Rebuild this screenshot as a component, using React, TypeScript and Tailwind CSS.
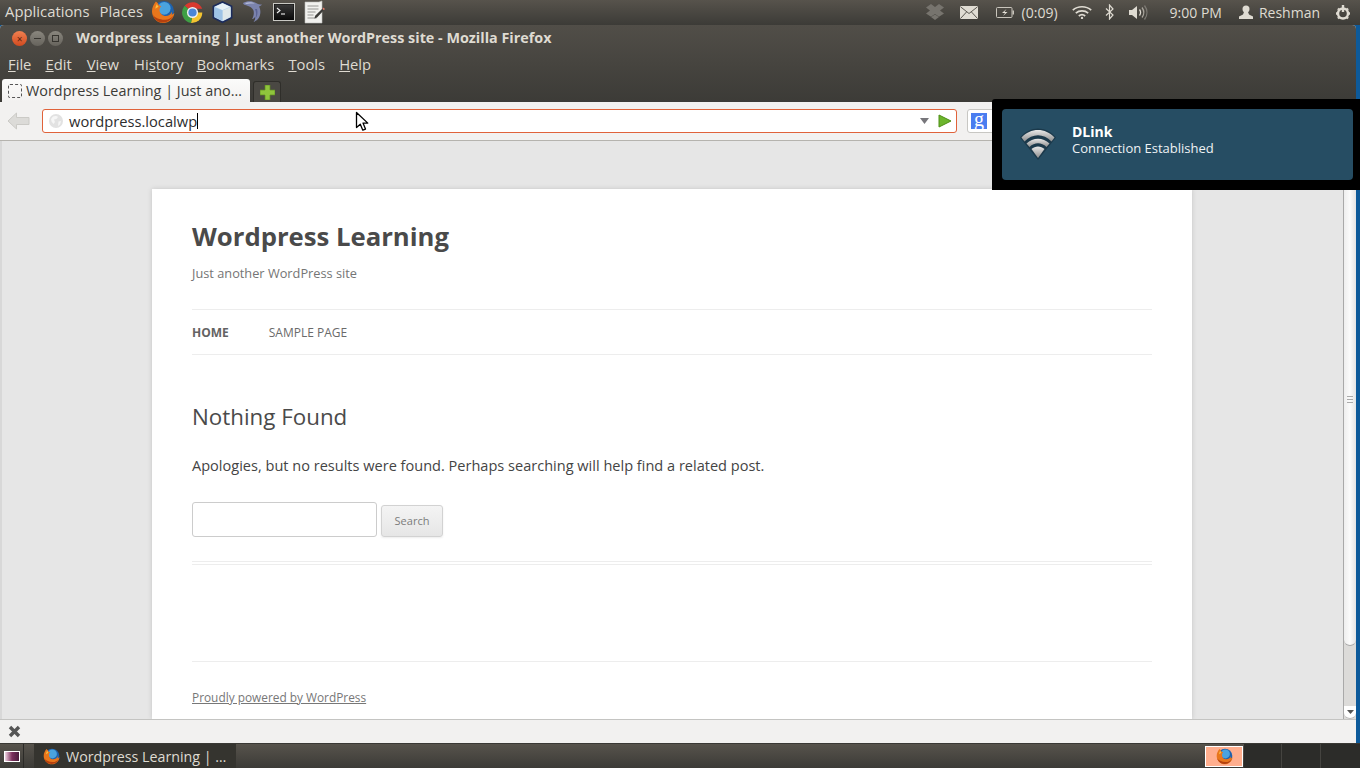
import React from 'react';

const uiFont = "font-['Open_Sans','Noto_Sans',sans-serif]";

const FirefoxIcon = ({ size = 24 }: { size?: number }) => (
  <svg width={size} height={size} viewBox="0 0 24.500 24.500">
    <circle cx="13" cy="11.500" r="10.500" fill="#1f62ad" />
    <circle cx="13.500" cy="8.500" r="6.500" fill="#4aa3de" />
    <path d="M5 1.500C3 4 .8 7.500 1 12c.3 6.500 5.500 11.500 11.500 11.500 6 0 11-4.500 11.300-10.500-.8 1.200-1.800 1.800-2.800 2 .5-1 .6-2 .5-3-1.500 3-4.500 4.800-7.500 4.300-3-.5-5.300-3-5.300-6 0-1.500.7-3 1.800-4-1.800-.2-3-1.500-3.500-3z" fill="#e8761c" />
    <path d="M1.800 15c1.400 5 5.700 8 10.700 8 4.500 0 8.300-2.800 10.300-6.800-2.500 3-5.800 4.300-9.300 4-4.500-.4-9.200-1.700-11.700-5.200z" fill="#b5400e" />
    <path d="M6 4c-.8 1.800-1.500 3-1.500 5 1-1 2-1.600 3.200-2.200C7 6 6.400 5 6 4z" fill="#f9c242" />
  </svg>
);

const ChromeIcon = () => (
  <svg width="23" height="23" viewBox="0 0 24 24">
    <path d="M12 12 3.800 5A11 11 0 0 1 22.200 8H12z" fill="#d8392f" />
    <path d="M12 12h10.200A11 11 0 0 1 10.500 23L12 12z" fill="#f4c430" />
    <path d="M12 12l-1.500 11A11 11 0 0 1 3.800 5L12 12z" fill="#3f9f45" />
    <circle cx="12" cy="12" r="5.800" fill="#f2f2f2" />
    <circle cx="12" cy="12" r="4.300" fill="#4a86d8" />
  </svg>
);

const CubeIcon = () => (
  <svg width="23" height="24" viewBox="0 0 24 24">
    <path d="M12 1.500 21.500 6v12L12 22.800 2.500 18V6z" fill="#b8d4ec" stroke="#1c2c5c" strokeWidth="1.800" strokeLinejoin="round" />
    <path d="M12 2.800 20 6.500 12 10 4 6.500z" fill="#e8f2f8" />
    <path d="M12 10.500v10.800L20.500 17V7z" fill="#dfe8ea" />
    <path d="M12 10.500v10.800L3.500 17V7z" fill="#9ec3e6" />
  </svg>
);

const DolphinIcon = () => (
  <svg width="24" height="24" viewBox="0 0 24 24">
    <path d="M1 3c4-2.500 9-2.500 13 0 2 1 3.500 1.500 6 1.500-1 1.200-2 1.800-3 2 2 3.500 2 9-1 12.500-1 1.200-2.500 2-4.500 3 1.500-2 1.800-3.200 1.500-5-.4.800-1.200 1.600-3 2 1.500-2.500 2.300-5 1.500-8.500C10.500 7.500 6 5.500 3 5 2 4.800 1.400 4 1 3z" fill="#7b83ad" />
    <path d="M3 3c3-1 7-1 10 .5-3 0-6 0-8 .5C4 4 3.500 3.500 3 3z" fill="#b3b9d6" />
    <path d="M13 9c1.500 3 1.500 7 0 10 2.500-2.500 3-6.500 2-10z" fill="#5a6293" />
  </svg>
);

const TerminalIcon = () => (
  <svg width="22" height="18" viewBox="0 0 22 18">
    <rect x=".5" y=".5" width="21" height="17" fill="#0b0b0b" stroke="#c9c9c4" />
    <rect x="1.500" y="1.500" width="19" height="15" fill="url(#termGrad)" />
    <defs>
      <linearGradient id="termGrad" x1="0" y1="0" x2="0" y2="1">
        <stop offset="0" stopColor="#3a3a3a" />
        <stop offset="1" stopColor="#0a0a0a" />
      </linearGradient>
    </defs>
    <path d="M4 5l3 2.500L4 10" fill="none" stroke="#f0f0f0" strokeWidth="1.100" />
    <path d="M8 11h4" stroke="#f0f0f0" strokeWidth="1.100" />
  </svg>
);

const EditorIcon = () => (
  <svg width="22" height="24" viewBox="0 0 22 24">
    <path d="M1 2h14l3-1v22H1z" fill="#f1f1ee" stroke="#bdbdb8" strokeWidth=".6" />
    <path d="M3.500 6h11M3.500 9h11M3.500 12h8M3.500 15h6M3.500 18h9" stroke="#8d8d88" strokeWidth=".9" />
    <path d="M19.500 7.500 21 9l-8 8.500-2.600 1 .8-2.800z" fill="#3b3b38" />
    <path d="M19.500 7.500 21 9l-1.200 1.300-1.500-1.500z" fill="#d77a6a" />
  </svg>
);

const WifiIcon = ({ size = 20, color = '#dfdbd2' }: { size?: number; color?: string }) => (
  <svg width={size} height={size * 0.72} viewBox="0 0 20 14.400" fill="none" stroke={color} strokeWidth="1.700">
    <path d="M.8 5.200C5.800.6 14.200.6 19.200 5.200" />
    <path d="M3.800 8.200c3.400-3 9-3 12.400 0" />
    <path d="M6.800 11C8.700 9.400 11.300 9.400 13.200 11" />
    <circle cx="10" cy="13" r="1.200" fill={color} stroke="none" />
  </svg>
);

const TopPanel = () => (
  <div className={`h-[25px] shrink-0 flex items-center pb-px bg-gradient-to-b from-[#57534c] to-[#3c3b37] text-[#dfdbd2] text-[14.850px] ${uiFont}`}>
    <span className="ml-[5px] -mt-[2px]">Applications</span>
    <span className="ml-[10px] -mt-[2px]">Places</span>
    <div className="ml-[7px] flex items-center">
      <div className="w-[25px] flex justify-center"><FirefoxIcon /></div>
      <div className="ml-[6px] w-[23px]"><ChromeIcon /></div>
      <div className="ml-[7px] w-[23px]"><CubeIcon /></div>
      <div className="ml-[8px] w-[24px]"><DolphinIcon /></div>
      <div className="ml-[7px] w-[22px] flex"><TerminalIcon /></div>
      <div className="ml-[9px] w-[22px]"><EditorIcon /></div>
    </div>
    <div className="ml-auto flex items-center">
      <svg width="18" height="16" viewBox="0 0 18 16" fill="#77746e">
        <path d="M5 0 9 3l4-3 5 3.500-4 3 4 3-5 3.200-4-2.700-4 2.700-5-3.200 4-3-4-3z" />
        <path d="M5 13l4 3 4-3-4-2.500z" />
      </svg>
      <svg className="ml-[16px]" width="18" height="13" viewBox="0 0 18 13">
        <rect width="18" height="13" rx="1" fill="#e0dcd3" />
        <path d="M.5.800 9 7.500 17.500.800M.5 12.500 6.500 6M17.500 12.500 11.500 6" fill="none" stroke="#5a5750" strokeWidth="1" />
      </svg>
      <svg className="ml-[18px]" width="18" height="11" viewBox="0 0 18 11" fill="none">
        <rect x=".5" y=".5" width="15.500" height="10" rx="1" stroke="#c9c5bc" />
        <rect x="16.500" y="3.500" width="1.500" height="4" fill="#c9c5bc" />
        <path d="M10.500 2 6 6h3l-2 3 4.500-4h-3z" fill="#e5e1d8" />
      </svg>
      <span className="ml-[8px] text-[14px]">(0:09)</span>
      <div className="ml-[14px] flex"><WifiIcon /></div>
      <svg className="ml-[13px]" width="9" height="16" viewBox="0 0 9 16" fill="none" stroke="#dfdbd2" strokeWidth="1.200">
        <path d="M1 4.500 8 11l-3.500 4V1L8 5 1 11.500" />
      </svg>
      <svg className="ml-[15px]" width="20" height="17" viewBox="0 0 20 17" fill="none">
        <path d="M0 6h3l5-4v13l-5-4H0z" fill="#dfdbd2" />
        <path d="M10.500 5.500c1.300 1.800 1.300 4.200 0 6" stroke="#dfdbd2" strokeWidth="1.300" />
        <path d="M13 3.500c2.200 3 2.200 7 0 10" stroke="#a8a49c" strokeWidth="1.300" />
        <path d="M15.500 1.500c3.200 4.200 3.200 9.800 0 14" stroke="#7d7a74" strokeWidth="1.300" />
      </svg>
      <span className="ml-[21px] text-[14px]">9:00 PM</span>
      <svg className="ml-[17px]" width="14" height="14" viewBox="0 0 14 14" fill="#dfdbd2">
        <circle cx="7" cy="4" r="3.500" />
        <path d="M5 7h4l1 2.500 4 2v2.500H0v-2.500l4-2z" />
      </svg>
      <span className="ml-[6px] text-[14px]">Reshman</span>
      <svg className="ml-[15px] mr-[9px]" width="16" height="17" viewBox="0 0 16 17" fill="none" stroke="#dfdbd2" strokeWidth="2.400">
        <circle cx="8" cy="9.500" r="5" />
        <path d="M8 1v7M1 9.500h1.500M13.500 9.500H15M3 4.500l1 1M13 4.500l-1 1M3 14.500l1-1M13 14.500l-1-1" />
      </svg>
    </div>
  </div>
);

const TitleBar = () => (
  <div className={`h-[27px] shrink-0 flex items-center text-[#dfdbd2] ${uiFont}`}>
    <div className="ml-[12px] flex items-center gap-[3px]">
      <div className="w-[15px] h-[15px] rounded-full bg-gradient-to-b from-[#f08050] to-[#d14a1e] flex items-center justify-center text-[#5a2410] text-[10px] leading-none">×</div>
      <div className="w-[15px] h-[15px] rounded-full bg-gradient-to-b from-[#8a877f] to-[#66635c] flex items-center justify-center">
        <div className="w-[7px] h-px bg-[#36342f]" />
      </div>
      <div className="w-[15px] h-[15px] rounded-full bg-gradient-to-b from-[#8a877f] to-[#66635c] flex items-center justify-center">
        <div className="w-[7px] h-[7px] border border-[#36342f]" />
      </div>
    </div>
    <span className="ml-[13px] -mt-[2px] text-[14.360px] font-bold">Wordpress Learning | Just another WordPress site - Mozilla Firefox</span>
  </div>
);

const menuItems = [
  { label: 'File', key: 'F', w: 'ml-[8px]' },
  { label: 'Edit', key: 'E', w: 'ml-[14px]' },
  { label: 'View', key: 'V', w: 'ml-[15px]' },
  { label: 'History', key: 's', w: 'ml-[15px]' },
  { label: 'Bookmarks', key: 'B', w: 'ml-[13px]' },
  { label: 'Tools', key: 'T', w: 'ml-[14px]' },
  { label: 'Help', key: 'H', w: 'ml-[14px]' },
];

const MenuBar = () => (
  <div className={`h-[26px] shrink-0 flex items-center pb-[2px] text-[#dfdbd2] text-[14.800px] ${uiFont}`}>
    {menuItems.map((m) => {
      const i = m.label.indexOf(m.key);
      return (
        <span key={m.label} className={m.w}>
          {m.label.slice(0, i)}
          <span className="underline">{m.key}</span>
          {m.label.slice(i + 1)}
        </span>
      );
    })}
  </div>
);

const TabStrip = () => (
  <div className={`h-[24px] shrink-0 flex items-end pl-[2px] ${uiFont}`}>
    <div className="w-[248px] h-[23px] bg-gradient-to-b from-[#fbfbfa] to-[#f2f1f0] rounded-t-[3px] flex items-center pl-[6px]">
      <div className="w-[14px] h-[14px] border border-dashed border-[#555] rounded-[2px] shrink-0" />
      <span className="ml-[4px] text-[14.400px] text-[#3c3b37] whitespace-nowrap">Wordpress Learning | Just ano…</span>
    </div>
    <div className="ml-[3px] w-[28px] h-[21px] bg-[#4a4843] border border-[#2f2e2a] border-b-0 rounded-t-[3px] flex items-center justify-center">
      <svg width="15" height="15" viewBox="0 0 15 15">
        <path d="M5 0h5v5h5v5h-5v5H5v-5H0V5h5z" fill="#8fc43c" stroke="#5d8a1f" strokeWidth=".7" />
      </svg>
    </div>
  </div>
);

const NavBar = () => (
  <div className={`h-[39px] shrink-0 flex items-center bg-[#f2f1f0] border-b border-[#b5b3ae] ${uiFont}`}>
    <svg className="ml-[7px]" width="23" height="18" viewBox="0 0 23 18">
      <path d="M9.500 1 1 9l8.500 8v-4.500H22v-7H9.500z" fill="#dcdbd8" stroke="#cbcac6" />
    </svg>
    <div className="ml-[12px] w-[915px] h-[24px] bg-white border border-[#e0623a] rounded-[3px] flex items-center">
      <svg className="ml-[6px] shrink-0" width="14" height="14" viewBox="0 0 14 14">
        <circle cx="7" cy="7" r="7" fill="#e2e2e2" />
        <path d="M4 2.500C6 1.500 8 2 9 3L7.500 5 5 5.500 6 8 4.500 10 2.500 7.500 2 5zM9.500 7.500l2.500-.5L11 10.500 9 12z" fill="#f6f6f6" />
      </svg>
      <span className="ml-[6px] text-[14.700px] text-[#2d2d2d] leading-none">wordpress.localwp</span>
      <div className="w-px h-[16px] bg-black" />
      <svg className="ml-auto" width="9" height="6" viewBox="0 0 9 6"><path d="M0 0h9L4.500 6z" fill="#77767b" /></svg>
      <svg className="ml-[9px] mr-[4px]" width="14" height="14" viewBox="0 0 14 14">
        <path d="M1 1l12 6-12 6z" fill="#6cb52d" stroke="#4e8f17" />
      </svg>
    </div>
    <div className="ml-[10px] w-[40px] h-[24px] bg-white border border-[#c8c7c3] rounded-l-[3px] flex items-center pl-[3px]">
      <div className="w-[16px] h-[16px] bg-[#4a7df0] flex items-center justify-center text-white text-[20px] leading-none pb-[4px] font-['Liberation_Serif',serif]">g</div>
    </div>
  </div>
);

const Page = () => (
  <div className="flex-1 min-h-0 flex bg-[#e6e6e6] font-['Open_Sans',sans-serif] border-l-2 border-[#d8d8d8]">
    <div className="flex-1 min-w-0 pt-[48px] pl-[150px] overflow-hidden">
      <div className="w-[1040px] h-[530px] bg-white px-[40px] shadow-[0_0_5px_rgba(0,0,0,0.15)]">
        <h1 className="pt-[28px] text-[25.700px] leading-[40px] font-bold text-[#4a4a4a]">Wordpress Learning</h1>
        <p className="mt-[6px] text-[12.770px] leading-[20px] text-[#757575]">Just another WordPress site</p>
        <nav className="mt-[26px] h-[46px] border-y border-[#ededed] flex items-center pt-[2px] text-[12px] uppercase text-[#6a6a6a]">
          <span className="font-bold text-[#636363]">Home</span>
          <span className="ml-[40px]">Sample Page</span>
        </nav>
        <h2 className="mt-[44px] text-[22.350px] leading-[36px] text-[#4a4a4a]">Nothing Found</h2>
        <p className="mt-[18px] text-[14.560px] leading-[24px] text-[#444]">
          Apologies, but no results were found. Perhaps searching will help find a related post.
        </p>
        <div className="mt-[25px] flex items-end">
          <div className="w-[185px] h-[35px] border border-[#ccc] rounded-[3px] bg-white" />
          <div className="ml-[4px] w-[62px] h-[32px] rounded-[3px] border border-[#d2d2d2] bg-gradient-to-b from-[#f4f4f4] to-[#e6e6e6] flex items-center justify-center text-[11px] text-[#7c7c7c] shadow-[0_1px_2px_rgba(64,64,64,0.1)]">
            Search
          </div>
        </div>
        <div className="mt-[24px] h-[4px] border-y border-[#ededed]" />
        <div className="mt-[96px] h-px bg-[#ededed]" />
        <p className="mt-[25px] text-[11.860px] leading-[20px] text-[#777] underline">Proudly powered by WordPress</p>
      </div>
    </div>
    <Scrollbar />
  </div>
);

const Scrollbar = () => (
  <div className="w-[13px] shrink-0 flex flex-col bg-[#dcdbd9] border-l border-[#a9a9a9]">
    <div className="flex-1 min-h-0 bg-gradient-to-r from-[#eeeeee] via-[#fbfbfb] to-[#e4e4e4] rounded-b-[6px] border-b border-[#a9a9a9] mt-[49px] mb-[60px] relative">
      <div className="absolute left-[3px] top-[206px] w-[6px] h-[7px] border-y border-[#aaa] flex items-center"><div className="w-full h-px bg-[#aaa]" /></div>
    </div>
    <div className="h-[13px] shrink-0 bg-white rounded-b-[6px] border-b border-[#bbb] flex items-center justify-center">
      <svg width="7" height="4" viewBox="0 0 7 4"><path d="M0 0h7L3.500 4z" fill="#555" /></svg>
    </div>
  </div>
);

const StatusBar = () => (
  <div className="h-[24px] shrink-0 flex items-center bg-[#f2f1f0] border-t border-[#c4c4c2]">
    <svg className="ml-[8px]" width="13" height="13" viewBox="0 0 13 13" fill="none" stroke="#555" strokeWidth="3.400">
      <path d="M2 2l9 9M11 2l-9 9" />
    </svg>
  </div>
);

const TaskBar = () => (
  <div className={`h-[25px] shrink-0 flex items-center bg-gradient-to-b from-[#57534c] to-[#3c3b37] border-t border-[#3a3935] ${uiFont}`}>
    <div className="w-[24px] h-full flex items-center justify-center border-r border-[#2b2a27]">
      <div className="w-[16px] h-[11px] border border-white bg-gradient-to-r from-[#f2d8e6] via-[#7a2f5d] to-[#4a1c3c]" />
    </div>
    <div className="ml-[10px] w-[202px] h-full bg-[#35342f] flex items-center pl-[9px] pt-px text-[14.250px] text-[#dfdbd2]">
      <FirefoxIcon size={17} />
      <span className="ml-[6px] whitespace-nowrap">Wordpress Learning | …</span>
    </div>
    <div className="ml-auto flex h-full items-center">
      <div className="w-[38px] h-[21px] border border-white bg-[#ffae8e] flex items-center justify-center"><FirefoxIcon size={17} /></div>
      <div className="ml-px w-[38px] h-full bg-[#2c2c29] border-r border-[#454440]" />
      <div className="w-[39px] h-full bg-[#2c2c29] border-r border-[#454440]" />
      <div className="w-[39px] h-full bg-[#2c2c29]" />
    </div>
  </div>
);

const Notification = () => (
  <div className={`absolute left-[992px] top-[99px] w-[368px] h-[91px] bg-black rounded-tl-[3px] pl-[10px] pt-[10px] ${uiFont}`}>
    <div className="w-[351px] h-[71px] bg-[#264d63] rounded-[4px] flex items-center text-white">
      <div className="ml-[18px] w-[36px] h-[32px] flex justify-center -mt-[1px]">
        <svg width="36" height="32" viewBox="0 0 36 32">
          <defs>
            <linearGradient id="wifiGrad" x1="0" y1="0" x2="0" y2="1">
              <stop offset="0" stopColor="#e8e8e8" />
              <stop offset="1" stopColor="#8d8d8d" />
            </linearGradient>
          </defs>
          <path d="M18 32 0 9.500C10-2.500 26-2.500 36 9.500z" fill="#1b394b" />
          <path d="M1.500 9.500C10.500-.5 25.500-.5 34.500 9.500l-3 4C23.500 5 12.500 5 4.500 13.500z" fill="url(#wifiGrad)" />
          <path d="M6.500 15.500C13 9 23 9 29.500 15.500L26.500 19C21.500 14 14.500 14 9.500 19z" fill="url(#wifiGrad)" />
          <path d="M11.500 21C15.200 17.500 20.800 17.500 24.500 21L18 30z" fill="url(#wifiGrad)" />
        </svg>
      </div>
      <div className="ml-[16px] -mt-[10px]">
        <div className="text-[14px] leading-[17px] font-bold">DLink</div>
        <div className="text-[13px] leading-[17px] text-[#eef2f4]">Connection Established</div>
      </div>
    </div>
  </div>
);

const Cursor = () => (
  <svg className="absolute left-[355px] top-[111px]" width="14" height="21" viewBox="0 0 14 21">
    <path d="M1.500 1.500v15l3.800-3.300 2.500 6 2.700-1.100-2.500-6h4.800z" fill="#fff" stroke="#000" strokeWidth="1.300" strokeLinejoin="round" />
  </svg>
);

export default function App() {
  return (
    <div className="relative w-[1360px] h-[768px] overflow-hidden flex flex-col bg-[#0d5a9a]">
      <TopPanel />
      <div className="flex-1 min-h-0 w-[1356px] flex flex-col bg-[#f2f1f0] rounded-t-[4px]">
        <div className="shrink-0 bg-gradient-to-b from-[#514e48] to-[#3c3b37] rounded-t-[4px]">
          <TitleBar />
          <MenuBar />
          <TabStrip />
        </div>
        <NavBar />
        <Page />
        <StatusBar />
      </div>
      <TaskBar />
      <Notification />
      <Cursor />
    </div>
  );
}
